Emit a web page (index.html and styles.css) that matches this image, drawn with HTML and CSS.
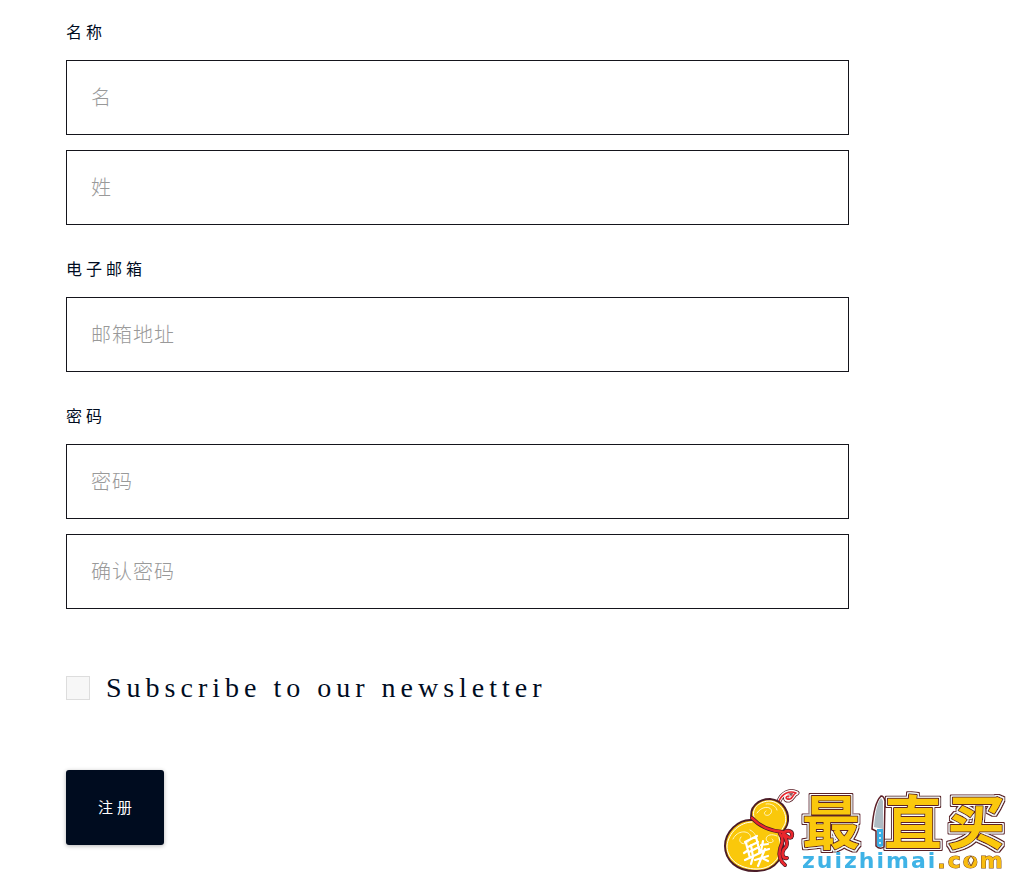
FILE: index.html
```html
<!DOCTYPE html>
<html lang="zh-CN">
<head>
	<meta charset="UTF-8">
	<meta name="viewport" content="width=device-width, initial-scale=1">
	<title>注册</title>
	<link rel="stylesheet" href="styles.css">
</head>
<body>
	<form class="signup">
		<div class="group">
			<label for="fname">名称</label>
			<input id="fname" type="text" placeholder="名">
			<input type="text" placeholder="姓" aria-label="姓">
		</div>
		<div class="group">
			<label for="email">电子邮箱</label>
			<input id="email" type="email" placeholder="邮箱地址">
		</div>
		<div class="group">
			<label for="password">密码</label>
			<input id="password" type="password" placeholder="密码">
			<input type="password" placeholder="确认密码" aria-label="确认密码">
		</div>
		<div class="subscribe">
			<input id="newsletter" type="checkbox">
			<label for="newsletter">Subscribe to our newsletter</label>
		</div>
		<button class="submit" type="button">注册</button>
	</form>

	<svg class="logo" width="290" height="120" viewBox="0 -30 290 120">
		<defs>
			<!-- white ring, then a dark ring round it -->
			<filter id="rings" x="-10%" y="-10%" width="120%" height="120%">
				<feMorphology in="SourceAlpha" operator="dilate" radius="2" result="outer"/>
				<feFlood flood-color="#5c2028"/>
				<feComposite in2="outer" operator="in" result="dark"/>
				<feMorphology in="SourceAlpha" operator="dilate" radius="1" result="inner"/>
				<feFlood flood-color="#fff"/>
				<feComposite in2="inner" operator="in" result="light"/>
				<feMerge>
					<feMergeNode in="dark"/>
					<feMergeNode in="light"/>
					<feMergeNode in="SourceGraphic"/>
				</feMerge>
			</filter>
		</defs>

		<!-- gourd -->
		<g fill="none" stroke-linecap="round" stroke-linejoin="round">
			<path d="M58 14C61 7 68 2 76 6C72 7 72 12 68 13C63 14 64 8 68 9" stroke="#5c2028" stroke-width="5"/>
			<path d="M58 14C61 7 68 2 76 6C72 7 72 12 68 13C63 14 64 8 68 9" stroke="#fff" stroke-width="3.4"/>
			<path d="M58 14C61 7 68 3 75 6C72 7 72 11 69 12C64 13 64 9 68 9" stroke="#e8262d" stroke-width="1.6"/>
			<path d="M31 33C27 20 38 12 49 12C62 13 70 26 66 38C64 43 60 46 60 51C67 67 55 84 36 84C16 85 4 73 4 59C4 45 17 32 31 33Z" fill="#fac80b" stroke="#4b1c27" stroke-width="2"/>
			<path d="M33 30C30 20 40 14 49 14C60 15 67 27 64 37C61 43 58 46 58 51C64 67 53 82 36 82C18 82 6 72 6 59C7 46 19 35 31 35" stroke="#fff"/>
			<path d="M36 26C42 17 53 20 50 26C47 31 40 27 45 24M45 17C50 16 55 19 56 23M12 52C18 40 33 45 29 53C25 60 15 56 20 50M29 43C33 45 35 48 35 51M56 49C48 45 42 51 47 55C51 57 54 54 51 52" stroke="#fff5c2"/>
			<path d="M31 31C39 40 50 44 62 45M62 46C67 42 72 44 71 49C70 53 65 49 62 46M59 47C64 53 60 58 59 62C57 69 60 75 64 78M62 47C67 54 67 59 63 62C60 67 62 72 66 71" stroke="#4b1c27" stroke-width="4"/>
			<path d="M31 31C39 40 50 44 62 45M62 46C67 42 72 44 71 49C70 53 65 49 62 46M59 47C64 53 60 58 59 62C57 69 60 75 64 78M62 47C67 54 67 59 63 62C60 67 62 72 66 71" stroke="#eb272d" stroke-width="2.6"/>
			<path d="M24 55L36 49M27 60L37 55M28 65L38 60M25 56L29 71M35 50L39 66M23 66L26 64M30 58L32 70M24 73L41 65M32 70L30 77M40 58L47 57M42 54L40 64M38 65L48 62M44 62L37 79M34 73L47 69M41 71L47 74" stroke="#fff" stroke-width="2.2"/>
		</g>

		<g class="brand" filter="url(#rings)">
			<text x="81" y="57">最</text>
			<text x="163" y="57">直</text>
			<text x="226" y="57">买</text>
		</g>

		<!-- knife -->
		<path d="M160 9C155 14 152 27 151 42L155 44V59Q159 63 163 60L164 14Q163 9 160 9Z" fill="#fff" stroke="#5c2028" stroke-width="1.5"/>
		<path d="M160 11C156 16 154 27 153 40L162 42V14Z" fill="#aebbc3"/>
		<path d="M156 42H162V59Q159 61 156 59Z" fill="#36aee5"/>
		<g fill="#fff"><circle cx="159" cy="46" r="1"/><circle cx="159" cy="51" r="1"/><circle cx="159" cy="56" r="1"/></g>

		<text class="domain" x="81" y="81">zuizhimai<tspan class="dotcom">.com</tspan></text>
		<path d="M250 69L253 73L250 79L247 73Z" fill="#fff" stroke="#7d4b1c" stroke-width="1"/>
	</svg>
</body>
</html>
```
FILE: styles.css
```css
*{
	box-sizing: border-box;
}
body{
	margin: 0;
	background-color: #fff;
	color: #000c1f;
	font-family: 'Liberation Serif', 'Noto Sans CJK SC', serif;
}
.signup{
	padding: 23px 172px 32px 66px;
}
.group{
	display: flex;
	flex-direction: column;
	gap: 15px;
	margin-bottom: 35px;
}
.group label{
	margin-bottom: 2px;
	font-size: 16px;
	line-height: 20px;
	letter-spacing: 4px;
}
.group input{
	width: 100%;
	height: 75px;
	padding: 2px 24px 0;
	border: 1px solid #15151c;
	border-radius: 0;
	outline: none;
	background-color: #fff;
	color: #000c1f;
	font-family: inherit;
	font-size: 20px;
	font-weight: 300;
	letter-spacing: 1px;
}
.group input::placeholder{
	color: #999;
	opacity: 1;
}
.subscribe{
	display: flex;
	align-items: center;
	gap: 16px;
	margin-top: 62px;
	margin-bottom: 65px;
}
.subscribe input{
	-webkit-appearance: none;
	appearance: none;
	width: 24px;
	height: 24px;
	margin: 0;
	border: 1px solid #ddd;
	background-color: #f7f7f7;
}
.subscribe input:checked{
	background-color: #000c1f;
}
.subscribe label{
	font-size: 28px;
	line-height: 34px;
	letter-spacing: 5px;
}
.submit{
	display: block;
	height: 75px;
	padding: 0 28px 2px 32px;
	border: none;
	border-radius: 3px;
	background-color: #000c1f;
	box-shadow: 0 1px 4px rgba(0, 0, 0, 0.3);
	color: #fff;
	font-family: inherit;
	font-size: 15px;
	letter-spacing: 4px;
	cursor: pointer;
}
.logo{
	position: fixed;
	right: 10px;
	bottom: 5px;
}
.brand text{
	fill: #fac80b;
	stroke: #5c2028;
	stroke-width: 2px;
	stroke-linejoin: round;
	paint-order: stroke;
	font-family: 'Noto Sans CJK SC', sans-serif;
	font-size: 58px;
	font-weight: 700;
}
.domain{
	fill: #3fb3e6;
	font-family: 'DejaVu Sans', sans-serif;
	font-size: 22px;
	font-weight: bold;
	letter-spacing: 2px;
}
.dotcom{
	fill: #f9bd10;
	stroke: #7d4b1c;
	stroke-width: 1px;
	paint-order: stroke;
}
```
